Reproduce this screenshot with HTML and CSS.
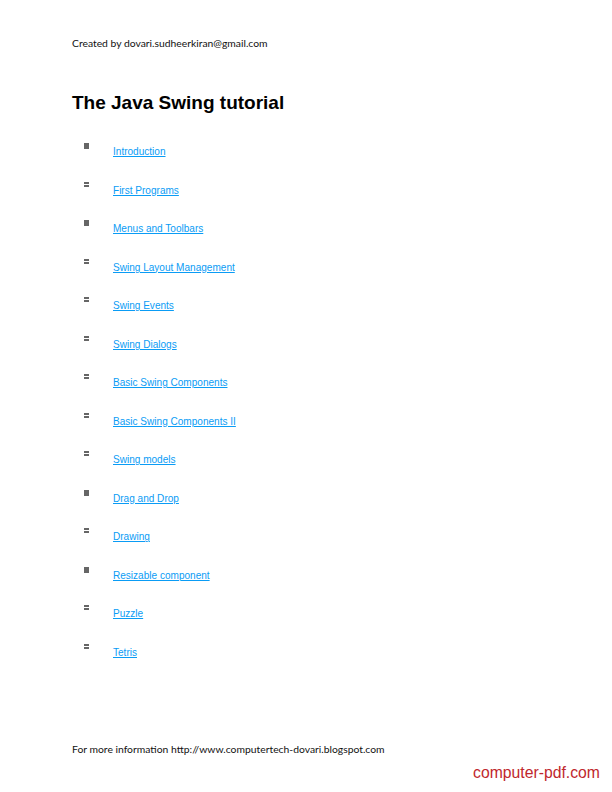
FILE: index.html
```
<!DOCTYPE html>
<html lang="en">
<head>
<meta charset="utf-8">
<title>The Java Swing tutorial</title>
<link rel="stylesheet" href="styles.css">
</head>
<body>
<main class="page">
  <p class="note">Created by dovari.sudheerkiran@gmail.com</p>
  <h1 class="title">The Java Swing tutorial</h1>
  <ul class="toc">
    <li class="item"><span class="bullet solid"></span><a class="link" href="#">Introduction</a></li>
    <li class="item"><span class="bullet striped"></span><a class="link" href="#">First Programs</a></li>
    <li class="item"><span class="bullet solid"></span><a class="link" href="#">Menus and Toolbars</a></li>
    <li class="item"><span class="bullet striped"></span><a class="link" href="#">Swing Layout Management</a></li>
    <li class="item"><span class="bullet striped"></span><a class="link" href="#">Swing Events</a></li>
    <li class="item"><span class="bullet striped"></span><a class="link" href="#">Swing Dialogs</a></li>
    <li class="item"><span class="bullet striped"></span><a class="link" href="#">Basic Swing Components</a></li>
    <li class="item"><span class="bullet striped"></span><a class="link" href="#">Basic Swing Components II</a></li>
    <li class="item"><span class="bullet striped"></span><a class="link" href="#">Swing models</a></li>
    <li class="item"><span class="bullet solid"></span><a class="link" href="#">Drag and Drop</a></li>
    <li class="item"><span class="bullet striped"></span><a class="link" href="#">Drawing</a></li>
    <li class="item"><span class="bullet solid"></span><a class="link" href="#">Resizable component</a></li>
    <li class="item"><span class="bullet striped"></span><a class="link" href="#">Puzzle</a></li>
    <li class="item"><span class="bullet striped"></span><a class="link" href="#">Tetris</a></li>
  </ul>
  <p class="note footer">For more information http://www.computertech-dovari.blogspot.com</p>
</main>
<div class="watermark">computer-pdf.com</div>
</body>
</html>
```
FILE: styles.css
```
html, body {
  margin: 0;
  padding: 0;
  background: #fff;
}
.page {
  box-sizing: border-box;
  width: 612px;
  height: 792px;
  padding: 36px 0 0 72px;
  display: flex;
  flex-direction: column;
}
.note {
  margin: 0;
  font: 10.35px/14px Lato, "Open Sans", sans-serif;
  color: #111;
}
.title {
  margin: 39px 0 0;
  font: bold 19px/28px "Liberation Sans", Arial, sans-serif;
  color: #000;
}
.toc {
  list-style: none;
  margin: 24px 0 0;
  padding: 0;
}
.item {
  height: 38.54px;
  display: flex;
  align-items: flex-start;
}
.bullet {
  box-sizing: border-box;
  width: 5px;
  margin: 2px 24px 0 12px;
  background: #666;
}
.solid {
  height: 6px;
}
.striped {
  height: 5px;
  background: linear-gradient(#666 0 2px, #fff 2px 3px, #666 3px 5px);
}
.link {
  margin-top: 4px;
  font: 10.05px/14px "Liberation Sans", Arial, sans-serif;
  color: #0a9cf5;
  text-decoration: underline;
}
.footer {
  margin-top: auto;
  margin-bottom: 36px;
}
.watermark {
  position: absolute;
  right: 12px;
  bottom: 9px;
  font: 15.75px/20px "Liberation Sans", Arial, sans-serif;
  color: #c0272d;
}
```
